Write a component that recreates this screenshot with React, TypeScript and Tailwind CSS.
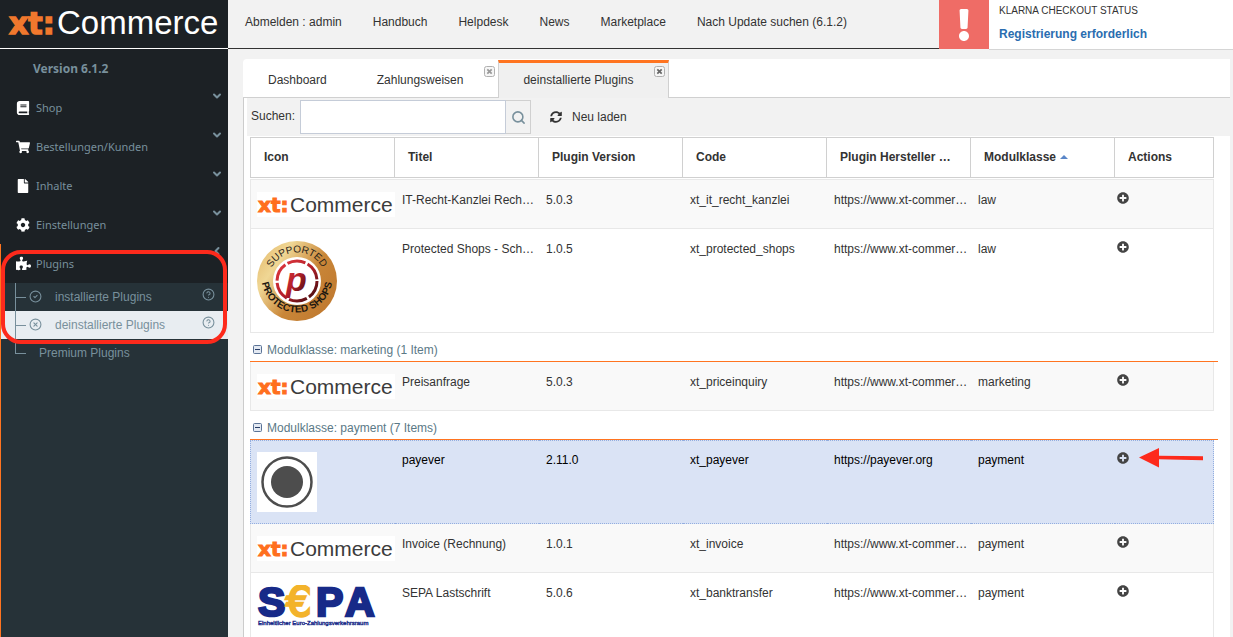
import React from 'react';
import {
  FaBook,
  FaShoppingCart,
  FaFile,
  FaCog,
  FaPuzzlePiece,
  FaExclamation,
  FaPlusCircle,
  FaSyncAlt,
} from 'react-icons/fa';
import { ChevronDown, ChevronLeft, CircleCheck, CircleHelp, CircleX, Search } from 'lucide-react';

const topLinks = ['Abmelden : admin', 'Handbuch', 'Helpdesk', 'News', 'Marketplace', 'Nach Update suchen (6.1.2)'];

const menu = [
  { label: 'Shop', icon: <FaBook className="h-[14px] w-auto" /> },
  { label: 'Bestellungen/Kunden', icon: <FaShoppingCart className="h-[14px] w-auto" /> },
  { label: 'Inhalte', icon: <FaFile className="h-[14px] w-auto" /> },
  { label: 'Einstellungen', icon: <FaCog className="h-[14px] w-auto" /> },
];

const columns = ['Icon', 'Titel', 'Plugin Version', 'Code', 'Plugin Hersteller …', 'Modulklasse', 'Actions'];

type Plugin = {
  icon: React.ReactNode;
  title: string;
  version: string;
  code: string;
  url: string;
  group: string;
  striped?: boolean;
  selected?: boolean;
};

const XtLogo = () => (
  <svg width="138" height="25" viewBox="0 0 138 25" className="block bg-white" role="img" aria-label="xt:Commerce">
    <text x="1" y="20" fill="#ff6f1e" stroke="#ff6f1e" strokeWidth="1" fontFamily="DejaVu Sans, sans-serif" fontWeight="700" fontSize="20">xt:</text>
    <text x="33" y="20" fill="#3c3c3c" fontFamily="Liberation Sans, sans-serif" fontSize="21">Commerce</text>
  </svg>
);

const ProtectedSeal = () => (
  <svg width="80" height="80" viewBox="0 0 80 80" className="block" role="img" aria-label="Protected Shops">
    <defs>
      <linearGradient id="gold" x1="0" y1="0" x2="1" y2="0.7">
        <stop offset="0" stopColor="#e2b566" />
        <stop offset="0.3" stopColor="#f0d795" />
        <stop offset="0.65" stopColor="#c98638" />
        <stop offset="1" stopColor="#c07a30" />
      </linearGradient>
      <linearGradient id="ruby" x1="0" y1="0" x2="1" y2="1">
        <stop offset="0" stopColor="#e23a40" />
        <stop offset="0.5" stopColor="#b5202a" />
        <stop offset="1" stopColor="#3a0a0c" />
      </linearGradient>
      <path id="sealTop" d="M11.500 40a28.500 28.500 0 0 1 57 0" />
      <path id="sealBottom" d="M4.500 36a35.500 35.500 0 0 0 71 0" />
    </defs>
    <circle cx="40" cy="40" r="40" fill="url(#gold)" />
    <circle cx="40" cy="40" r="24" fill="#fff" />
    <circle cx="40" cy="40" r="20" fill="none" stroke="url(#ruby)" strokeWidth="3" strokeDasharray="18.500 2.440" />
    <text x="29" y="50" fill="url(#ruby)" fontFamily="Liberation Sans, sans-serif" fontStyle="italic" fontWeight="700" fontSize="34">p</text>
    <text fill="#2b241a" fontFamily="Liberation Sans, sans-serif" fontSize="10" textAnchor="middle">
      <textPath href="#sealTop" startOffset="50%">SUPPORTED</textPath>
    </text>
    <text fill="#1c1710" fontFamily="Liberation Sans, sans-serif" fontWeight="700" fontSize="10" textAnchor="middle">
      <textPath href="#sealBottom" startOffset="50%">PROTECTED SHOPS</textPath>
    </text>
  </svg>
);

const PayeverLogo = () => (
  <svg width="60" height="60" viewBox="0 0 60 60" className="block bg-white" role="img" aria-label="payever">
    <circle cx="30" cy="30" r="24.500" fill="none" stroke="#4d4d4d" strokeWidth="2.500" />
    <circle cx="30" cy="30" r="16" fill="#4d4d4d" />
  </svg>
);

const SepaLogo = () => (
  <svg width="124" height="44" viewBox="0 0 124 44" className="block" role="img" aria-label="SEPA">
    <g fill="#172a88" stroke="#172a88" strokeWidth="2.500" fontFamily="Liberation Sans, sans-serif" fontWeight="700" fontSize="41">
      <text x="1" y="31">S</text>
      <text x="59" y="31">P</text>
      <text x="88" y="31">A</text>
    </g>
    <text x="29" y="31" fill="#f3b32b" stroke="#f3b32b" strokeWidth="2.500" fontFamily="DejaVu Sans, sans-serif" fontSize="40">€</text>
    <text x="1" y="40" fill="#172a88" stroke="#172a88" strokeWidth="0.400" fontFamily="Liberation Sans, sans-serif" fontSize="6">Einheitlicher Euro-Zahlungsverkehrsraum</text>
  </svg>
);

const law: Plugin[] = [
  { icon: <XtLogo />, title: 'IT-Recht-Kanzlei Rech…', version: '5.0.3', code: 'xt_it_recht_kanzlei', url: 'https://www.xt-commer…', group: 'law', striped: true },
  { icon: <ProtectedSeal />, title: 'Protected Shops - Sch…', version: '1.0.5', code: 'xt_protected_shops', url: 'https://www.xt-commer…', group: 'law' },
];

const marketing: Plugin[] = [
  { icon: <XtLogo />, title: 'Preisanfrage', version: '5.0.3', code: 'xt_priceinquiry', url: 'https://www.xt-commer…', group: 'marketing', striped: true },
];

const payment: Plugin[] = [
  { icon: <PayeverLogo />, title: 'payever', version: '2.11.0', code: 'xt_payever', url: 'https://payever.org', group: 'payment', selected: true },
  { icon: <XtLogo />, title: 'Invoice (Rechnung)', version: '1.0.1', code: 'xt_invoice', url: 'https://www.xt-commer…', group: 'payment', striped: true },
  { icon: <SepaLogo />, title: 'SEPA Lastschrift', version: '5.0.6', code: 'xt_banktransfer', url: 'https://www.xt-commer…', group: 'payment' },
];

const PluginRow = ({ plugin }: { plugin: Plugin }) => {
  const tone = plugin.selected
    ? 'bg-[#dae3f5] text-black border-dotted border-[#93aee0] border-y'
    : plugin.striped
      ? 'bg-[#f9f9f9] text-[#333] border-[#e8e8e8] border-b'
      : 'bg-white text-[#333] border-[#e8e8e8] border-b';
  const top = plugin.selected ? 'pt-[11px]' : 'pt-3';

  return (
    <tr className="align-top">
      <td className={`${tone} ${top} border-l pl-[6px] pb-[11px] overflow-hidden`}>{plugin.icon}</td>
      {[plugin.title, plugin.version, plugin.code, plugin.url, plugin.group].map((text, i) => (
        <td key={i} className={`${tone} ${top} pl-[7px] leading-4 whitespace-nowrap overflow-hidden`}>{text}</td>
      ))}
      <td className={`${tone} ${top} border-r pl-[2px]`}>
        <div className="relative">
          <button className="block text-[#444]" aria-label="Plugin installieren">
            <FaPlusCircle size={12} />
          </button>
          {plugin.selected && (
            <svg className="absolute left-[22px] -top-[5px]" width="66" height="22" viewBox="0 0 66 22">
              <path d="M0 10.500 20 1v7.700l44 .6v4l-44-1V20.500z" fill="#fd2a1c" />
            </svg>
          )}
        </div>
      </td>
      <td></td>
    </tr>
  );
};

const GroupRow = ({ label }: { label: string }) => (
  <tr>
    <td colSpan={8} className="h-[29px] p-0 pl-[3px] border-b border-[#ff7420]">
      <button className="flex items-center gap-1 pt-[6px] leading-4 text-[#5b7986]">
        <svg width="10" height="10" viewBox="0 0 10 10">
          <rect x="0.500" y="0.500" width="8" height="8" rx="1" fill="#e3e9f2" stroke="#5b7396" />
          <path d="M2 4.500h5" stroke="#263c66" />
        </svg>
        {label}
      </button>
    </td>
  </tr>
);

const TabClose = ({ active }: { active?: boolean }) => (
  <button
    className={`absolute right-[3px] ${active ? 'top-[3px] text-[#666]' : 'top-[7px] text-[#999]'}`}
    aria-label="Tab schließen"
  >
    <svg width="11" height="11" viewBox="0 0 11 11" fill="none">
      <rect x="0.500" y="0.500" width="10" height="10" rx="2" fill="#f6f6f6" stroke="#b0b0b0" />
      <path d="M3.300 3.300l4.400 4.400M7.700 3.300 3.300 7.700" stroke="currentColor" strokeWidth="1.700" />
    </svg>
  </button>
);

const Sidebar = () => (
  <aside className="w-[228px] shrink-0 flex flex-col bg-[#1c2125] text-[#78909c]">
    <div className="h-[49px] border-b border-white">
      <svg width="228" height="48" viewBox="0 0 228 48" className="block" role="img" aria-label="xt:Commerce">
        <text x="9" y="34" fill="#f0782d" stroke="#f0782d" strokeWidth="1.500" fontFamily="DejaVu Sans, sans-serif" fontWeight="700" fontSize="30">xt:</text>
        <text x="57" y="34" fill="#fff" fontFamily="Liberation Sans, sans-serif" fontSize="33">Commerce</text>
      </svg>
    </div>
    <div className="h-[39px] pl-[33px] flex items-center font-['Noto_Sans',sans-serif] text-xs font-bold">Version 6.1.2</div>
    <nav className="flex-1 flex flex-col">
      {menu.map((item) => (
        <button key={item.label} className="h-[39px] shrink-0 flex text-left font-['Noto_Sans',sans-serif] text-[11px]">
          <span className="w-5 ml-4 h-full flex items-center text-white">{item.icon}</span>
          <span className="flex-1 h-full pt-px flex items-center">{item.label}</span>
          <ChevronDown size={12} strokeWidth={4} className="mt-[2px] mr-[5px]" />
        </button>
      ))}

      <div className="relative flex-1 flex flex-col border-l border-[#ff7420]">
        <button className="h-[39px] shrink-0 flex text-left font-['Noto_Sans',sans-serif] text-[11px]">
          <span className="w-5 ml-[15px] h-full flex items-center text-white"><FaPuzzlePiece size={15} /></span>
          <span className="flex-1 h-full pt-px flex items-center">Plugins</span>
          <ChevronLeft size={12} strokeWidth={4} className="mt-px mr-[5px]" />
        </button>
        <div className="flex-1 bg-[#263238]">
          <a href="#installed" className="h-7 pl-[14px] flex items-center">
            <span className="w-[11px] h-full border-l border-[#78909c]"><span className="block h-[15px] border-b border-[#78909c]"></span></span>
            <CircleCheck size={13} className="ml-[3px] mb-[2px]" />
            <span className="ml-[13px] flex-1">installierte Plugins</span>
            <CircleHelp size={13} className="mb-[6px] mr-[13px]" />
          </a>
          <a href="#uninstalled" className="h-7 pl-[14px] flex items-center bg-[#e8edf1]">
            <span className="w-[11px] h-full border-l border-[#78909c]"><span className="block h-[15px] border-b border-[#78909c]"></span></span>
            <CircleX size={13} className="ml-[3px] mb-[2px]" />
            <span className="ml-[13px] flex-1">deinstallierte Plugins</span>
            <CircleHelp size={13} className="mb-[6px] mr-[13px]" />
          </a>
          <a href="#premium" className="h-7 pl-[14px] flex items-center">
            <span className="w-[11px] h-full"><span className="block h-[15px] border-l border-b border-[#78909c]"></span></span>
            <span className="ml-[13px]">Premium Plugins</span>
          </a>
        </div>
        {/* highlight ring round the plugin entries */}
        <div className="absolute top-[6px] left-0 right-px h-[94px] rounded-[20px] border-4 border-[#fd2a1c] pointer-events-none"></div>
      </div>
    </nav>
  </aside>
);

const App = () => {
  return (
    <div className="h-screen overflow-hidden flex bg-[#f2f2f2] font-['Liberation_Sans',Arial,sans-serif] text-xs text-[#333]">
      <Sidebar />

      <div className="flex-1 min-w-0 flex flex-col">
        <header className="flex items-start">
          <nav className="flex-1 h-[49px] pl-[17px] pb-1 flex items-center gap-[31px] border-b border-[#333] whitespace-nowrap">
            {topLinks.map((link) => (
              <a key={link} href="#top">{link}</a>
            ))}
          </nav>
          <div className="w-[50px] h-[49px] flex items-center justify-center bg-[#ef6c66] text-white">
            <FaExclamation size={32} />
          </div>
          <div className="w-[244px] h-[50px] pl-[10px] pt-[3px] bg-white border-b border-[#d5d5d5]">
            <div className="text-[10px] leading-4">KLARNA CHECKOUT STATUS</div>
            <a href="#klarna" className="block mt-[7px] leading-4 font-bold text-[#2a6db0]">Registrierung erforderlich</a>
          </div>
        </header>

        <main className="flex-1 min-h-0 flex flex-col mt-[9px] ml-[15px] mr-[3px]">
          <div className="h-[39px] shrink-0 flex items-stretch bg-white rounded-tl border-b border-[#d0d0d0]" role="tablist">
            <div className="px-[25px] pt-1 flex items-center">
              <button role="tab">Dashboard</button>
            </div>
            <div className="relative pl-[25px] pr-[35px] pt-1 flex items-center">
              <button role="tab">Zahlungsweisen</button>
              <TabClose />
            </div>
            <div className="relative mt-px -mb-px pl-6 pr-[34px] pb-[2px] flex items-center bg-[#f0f0f0] border-x border-[#d0d0d0] border-t-3 border-t-[#ff7420]">
              <button role="tab" aria-selected="true">deinstallierte Plugins</button>
              <TabClose active />
            </div>
          </div>

          <section className="flex-1 min-h-0 pl-[3px] bg-white border-l border-[#ccc] overflow-hidden">
            <div className="h-[38px] pl-1 pt-[2px] flex bg-[#f2f2f2]">
              <label htmlFor="search" className="w-[49px] pt-2 leading-4">Suchen:</label>
              <input id="search" type="text" className="w-[206px] h-[34px] px-2 bg-white border border-[#c5ccd8] outline-none" />
              <button className="w-[25px] h-[34px] flex items-center justify-center border border-l-0 border-[#d0d0d0] text-[#78909c]" aria-label="Suchen">
                <Search size={15} strokeWidth={2.5} />
              </button>
              <button className="h-[34px] ml-[19px] flex items-center gap-[10px]">
                <FaSyncAlt size={12} />
                Neu laden
              </button>
            </div>

            <div className="pt-px pl-[3px] pr-3">
              <table className="w-full table-fixed border-separate border-spacing-0">
                <colgroup>
                  <col className="w-[145px]" />
                  <col className="w-[144px]" />
                  <col className="w-[144px]" />
                  <col className="w-[144px]" />
                  <col className="w-[144px]" />
                  <col className="w-[144px]" />
                  <col />
                  <col className="w-1" />
                </colgroup>
                <thead>
                  <tr>
                    {columns.map((col) => (
                      <th key={col} className="h-[41px] pl-[13px] pb-[2px] text-left font-bold border-y border-r first:border-l border-[#d0d0d0] whitespace-nowrap">
                        {col}
                        {col === 'Modulklasse' && (
                          <svg className="inline ml-1" width="8" height="4" viewBox="0 0 8 4"><path d="M0 4 4 0l4 4z" fill="#5a86c8" /></svg>
                        )}
                      </th>
                    ))}
                    <th></th>
                  </tr>
                </thead>
                <tbody>
                  <tr aria-hidden="true">
                    <td colSpan={7} className="h-[2px] p-0 border-b border-[#e8e8e8]"></td>
                    <td className="p-0"></td>
                  </tr>
                  {law.map((p) => <PluginRow key={p.code} plugin={p} />)}
                  <GroupRow label="Modulklasse: marketing (1 Item)" />
                  {marketing.map((p) => <PluginRow key={p.code} plugin={p} />)}
                  <GroupRow label="Modulklasse: payment (7 Items)" />
                  {payment.map((p) => <PluginRow key={p.code} plugin={p} />)}
                </tbody>
              </table>
            </div>
          </section>
        </main>
      </div>
    </div>
  );
};

export default App;
